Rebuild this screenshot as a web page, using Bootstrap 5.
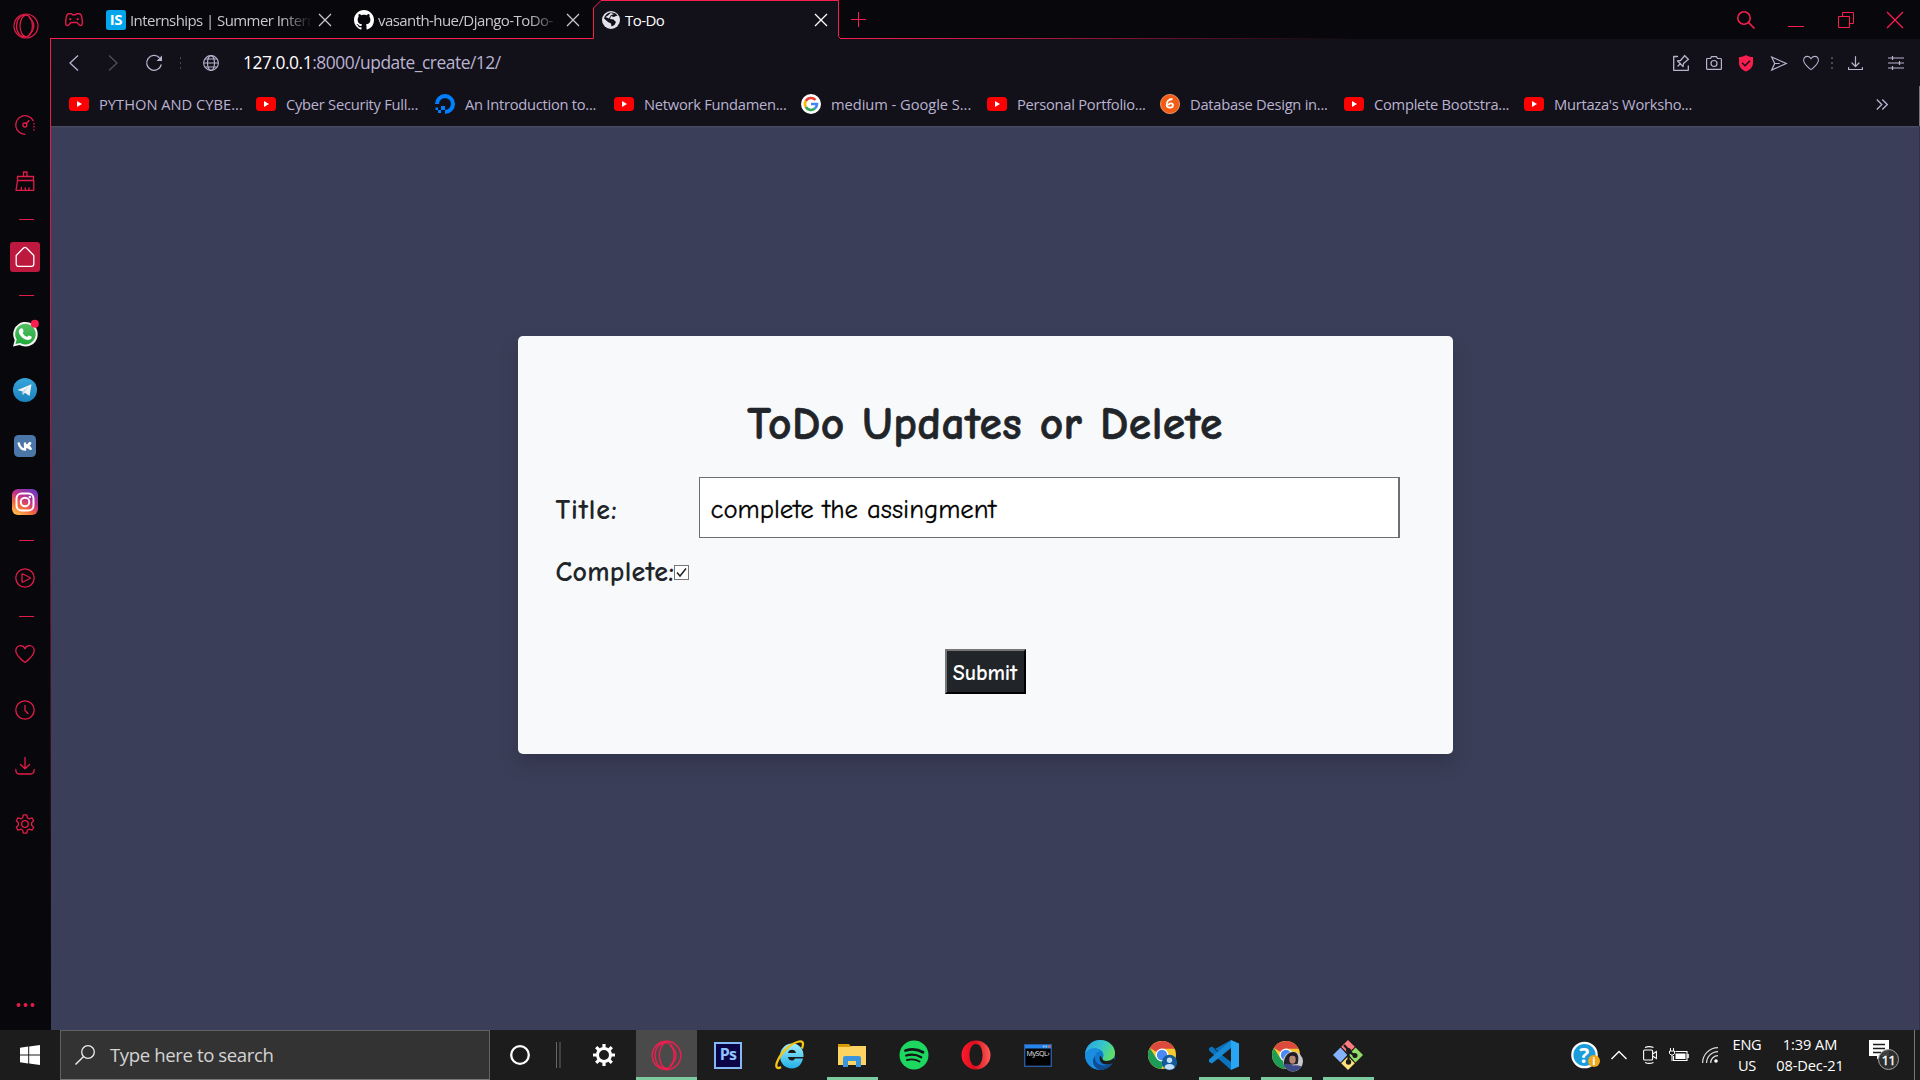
<!DOCTYPE html>
<html lang="en">
<head>
<meta charset="utf-8">
<title>To-Do</title>
<meta name="viewport" content="width=device-width, initial-scale=1">
<link href="https://cdn.jsdelivr.net/npm/bootstrap@5.3.0/dist/css/bootstrap.min.css" rel="stylesheet">
<style>
:root{--gx:#fa1e4e;--gxdim:#e21c48;--bar:#121019;--dark:#07070c;--lav:#b9b3d0}
html,body{height:100%;overflow:hidden}
body{font-family:"Segoe UI","Open Sans","Noto Sans",sans-serif;background:var(--dark);line-height:1}
svg{display:block;flex:none;overflow:visible}
.ln{fill:none;stroke:currentColor;stroke-linecap:round;stroke-linejoin:round}
/* sidebar */
.side{width:51px;flex:none;color:var(--gxdim);background:linear-gradient(#ef1d4b,#c01a40 35%,#5b1026 60%,#14080f 90%,#07070c) right 0 top 38px/1px 962px no-repeat var(--dark)}
.side .logo{height:51px;margin-bottom:46px}
.side .slot{height:56px;padding-right:1px}
.side .rule{height:20px;padding-left:2px}
.side .rule.tall{height:21px}
.side .rule i{width:15px;height:1px;background:var(--gxdim)}
.homebox{width:30px;height:30px;border-radius:3px;background:#bd183e}
/* tabs */
.strip{height:39px;background:var(--dark)}
.strip .frame{left:-1px;top:0;z-index:0}
.strip .front{z-index:1}
.pad{width:45px;color:var(--gxdim)}
.tab{width:248px;padding-left:10px;padding-right:12px;color:#c9c9cc;font-size:15px;letter-spacing:-.57px}
.tab .cap{width:184px;margin-left:4px;white-space:nowrap;line-height:24px}
.tab .fade-out{-webkit-mask-image:linear-gradient(90deg,#000 82%,transparent 99%)}
.tab.on{color:#fff}
.wctl{color:var(--gx);gap:33.5px;padding-right:17px}
/* toolbar */
.tools{height:47px;background:var(--bar);color:var(--lav);padding-left:17px;padding-right:16px}
.url{font-size:17.4px;letter-spacing:-.47px;margin-left:24px;white-space:nowrap;line-height:26px;padding-bottom:2px}
.url b{font-weight:400;color:#fff}
.marks{height:40px;background:var(--bar);color:var(--lav);padding-left:18px;padding-right:31px;border-right:1px solid #77757c}
.marks .list{grid-template-columns:187px 179px 179px 187px 186px 173px 184px 180px 180px;padding-top:7px}
.marks .item{font-size:14.7px;letter-spacing:-.26px;gap:10px;white-space:nowrap;line-height:22px}
/* page */
.page{background:#3a3e58;box-shadow:inset 0 2px 2px -1px #4c5069;padding-top:210px;border-right:1px solid #303349}
.box{width:935px;height:418px;border-radius:5px;background:#f8f9fa;box-shadow:0 10px 20px rgba(0,0,0,.16);padding:53px 38px 0;font-family:"Comic Sans MS","Comic Neue","Open Sans",sans-serif;color:#212529}
.box h1{font-size:45.5px;font-weight:700;line-height:70px;letter-spacing:.45px;word-spacing:1px;margin:0 0 18px;-webkit-text-stroke:.6px currentColor}
.fld{font-size:28px;font-weight:700;line-height:40px;letter-spacing:.25px}
.fld .name{width:143px;padding-top:4px;letter-spacing:.9px}
.title-in{width:701px;height:61px;border:1px solid #6f6f6f;border-right-width:2px;border-radius:0;padding:3px 11px 0;font-size:26.8px;font-weight:400;letter-spacing:0;color:#000;background:#fff;outline:0;-webkit-text-stroke:.3px currentColor}
.tick{width:15px;height:15px;border:1px solid #767676;background:#fff;color:#222}
.send{width:81px;height:45px;background:#212529;color:#fff;border:2px outset #767676;border-right-color:#212529;border-bottom-color:#212529;font-size:22px;font-weight:700;letter-spacing:-.1px;padding:3px 0 0}
/* taskbar */
.task{height:50px;background:#1c1c1c;color:#fff}
.find{width:430px;height:50px;background:#333;border:1px solid #626262;border-bottom-color:#777;color:#d4d4d4;font-size:18.6px;letter-spacing:-.4px;padding-left:14px}
.app{width:62px;height:50px}
.app.run{background:linear-gradient(#7ccb9f,#7ccb9f) center bottom/51px 3px no-repeat}
.app.cur{background:linear-gradient(#7ccb9f,#7ccb9f) right bottom/61px 3px no-repeat,linear-gradient(#4a4a4a,#4a4a4a) right top/61px 50px no-repeat}
.small-t{font-size:14.6px;line-height:21.5px;text-align:center;letter-spacing:-.3px;white-space:nowrap}
.small-t.date{letter-spacing:-.1px}
.ps{font:700 16px/21px "Open Sans",sans-serif;width:28px;height:27px;border:2px solid #86b8f3;background:#0b0547;color:#8fc4ff;letter-spacing:-.7px;text-align:center}
</style>
<script src="https://cdn.jsdelivr.net/npm/bootstrap@5.3.0/dist/js/bootstrap.bundle.min.js"></script>
</head>
<body class="d-flex flex-column vh-100">
<svg width="0" height="0" class="position-absolute">
<defs>
<symbol id="yt" viewBox="0 0 20 20"><rect y="3" width="20" height="14" rx="3.5" fill="#f00"/><path d="M8 7l5 3-5 3z" fill="#fff"/></symbol>
<symbol id="xx" viewBox="0 0 14 14"><path d="M1 1l12 12M13 1L1 13" stroke="currentColor" stroke-width="1.3" fill="none"/></symbol>
<symbol id="gxo" viewBox="0 0 26 26"><g fill="none" stroke="currentColor" stroke-width="1.2"><circle cx="13" cy="13" r="12"/><ellipse cx="13.2" cy="13" rx="6.2" ry="10.8"/><path d="M13 2.2C8 1.500 3.500 6 3.500 13s4.500 11.500 9.500 10.800M16 4.500c6.500 5 6.500 12 0 17"/></g></symbol>
<symbol id="heart" viewBox="0 0 20 20"><path class="ln" stroke-width="1.3" d="M10 18.300C8.800 17.800.8 11.300.8 6.700.8 3.700 2.800 1.700 5.300 1.700 7.700 1.700 9.300 3 10 4.700c.7-1.700 2.300-3 4.700-3 2.500 0 4.500 2 4.500 5 0 4.600-8 11.100-9.200 11.600z"/></symbol>
<symbol id="down" viewBox="0 0 20 20"><path class="ln" stroke-width="1.3" d="M10 1.500v11M5.500 8.500l4.500 4.300 4.500-4.300M.8 13.500c0 3 1 4.500 3.500 4.500h11.400c2.500 0 3.500-1.500 3.500-4.500"/></symbol>
<symbol id="chrome" viewBox="0 0 30 30"><circle cx="15" cy="15" r="14" fill="#f7c92f"/><path d="M15 15L2.900 8A14 14 0 0 1 27.200 8.500H15z" fill="#db4a3c"/><path d="M15 1a14 14 0 0 1 12.200 7.500H15L9 18z" fill="#db4a3c"/><path d="M2.900 8A14 14 0 0 0 14 29l6.500-11L15 15 9.500 18.500z" fill="#1c9c57"/><circle cx="15" cy="15" r="6.500" fill="#fff"/><circle cx="15" cy="15" r="5.200" fill="#4a8af4"/></symbol>
<linearGradient id="fadeL" gradientUnits="userSpaceOnUse" x1="839" x2="1350" y1="0" y2="0"><stop stop-color="#fa1e4e"/><stop offset=".35" stop-color="#b81940"/><stop offset="1" stop-color="#0a080d"/></linearGradient>
<linearGradient id="ig" x1=".2" y1="1" x2=".8" y2="0"><stop stop-color="#fdc04f"/><stop offset=".3" stop-color="#f4693c"/><stop offset=".6" stop-color="#c5308c"/><stop offset="1" stop-color="#6b3bc0"/></linearGradient>
<linearGradient id="wa" x2="0" y2="1"><stop stop-color="#52c062"/><stop offset="1" stop-color="#20a83c"/></linearGradient>
<linearGradient id="tg" x2="0" y2="1"><stop stop-color="#37a5dc"/><stop offset="1" stop-color="#1b82bd"/></linearGradient>
<linearGradient id="edgeTop" x1="0" y1=".3" x2="1" y2=".7"><stop stop-color="#2aa6e8"/><stop offset=".5" stop-color="#37c6c6"/><stop offset="1" stop-color="#63e25a"/></linearGradient>
<linearGradient id="opr" x2="1" y2="0"><stop stop-color="#ff1b2d"/><stop offset=".45" stop-color="#d90d1e"/><stop offset="1" stop-color="#ff5c55"/></linearGradient>
<linearGradient id="iegr" x2="0" y2="1"><stop stop-color="#9df0ff"/><stop offset="1" stop-color="#23aee6"/></linearGradient>
</defs>
</svg>

<div class="d-flex flex-grow-1" style="min-height:0">
  <aside class="side d-flex flex-column">
    <div class="logo d-flex align-items-center justify-content-center"><svg width="26" height="26"><use href="#gxo"/></svg></div>
    <div class="slot d-flex align-items-center justify-content-center"><svg width="20" height="20" viewBox="0 0 20 20"><path class="ln" stroke-width="1.3" d="M10 19.300A9.300 9.300 0 1 1 18.200 5.600M14 5.500l-3 3.300"/><circle class="ln" stroke-width="1.3" cx="9.900" cy="10" r="2"/><path class="ln" stroke-width="1.300" stroke-dasharray=".5 2.500" d="M19 8.500v7"/></svg></div>
    <div class="slot d-flex align-items-center justify-content-center"><svg width="20" height="20" viewBox="0 0 20 20"><path class="ln" stroke-width="1.300" d="M8.500 5.500V1h3.500v4.500M2.500 9.500v-4h16v4zM2.500 9.500L1 19.300h17.800V9.500M6 19.300l.5-3M10.300 19.300V17M14 19.300v-2.500"/></svg></div>
    <div class="rule d-flex align-items-center justify-content-center"><i></i></div>
    <div class="slot d-flex align-items-center justify-content-center"><div class="homebox d-flex align-items-center justify-content-center text-white"><svg width="20" height="20" viewBox="0 0 20 20"><path class="ln" stroke-width="1.300" d="M1.200 8.500L8.500 1c1-.8 2-.8 3 0l7.300 7.500v8.500q0 2.300-2.300 2.300h-13q-2.300 0-2.300-2.300z"/></svg></div></div>
    <div class="rule tall d-flex align-items-center justify-content-center"><i></i></div>
    <div class="slot d-flex align-items-center justify-content-center"><svg width="26" height="26" viewBox="0 0 26 26"><path d="M1 25.500l1.700-6.300A12.300 12.300 0 1 1 7.500 24z" fill="#f3f3f3"/><path d="M3.500 23l1.200-4.400A10.300 10.300 0 1 1 8.200 22z" fill="url(#wa)"/><path d="M8.800 7.500c1-.7 1.700-.3 2 .6l.8 2c.2.800-.9 1.400-.9 1.800 1 2 2.400 3.200 4.300 3.900.6.100 1.200-1.600 1.900-1.400l2.600 1.200c.6.500 0 3.400-3.400 3.400-5 0-9.600-5.700-9.300-8.700.1-1.300 1-2.300 2-2.800z" fill="#fff"/><circle cx="22.800" cy="2.800" r="4" fill="#fa1e4e"/></svg></div>
    <div class="slot d-flex align-items-center justify-content-center"><svg width="24" height="24" viewBox="0 0 24 24"><circle cx="12" cy="12" r="12" fill="url(#tg)"/><path d="M4.500 12L18.500 6.300 16.500 18l-4.500-3.300-2.200 2.200-.3-3.500z" fill="#eef3f7"/><path d="M9.500 13.400L16 8.500 11 14l-1.200 2.900z" fill="#b9cfdf"/></svg></div>
    <div class="slot d-flex align-items-center justify-content-center"><svg width="22" height="22" viewBox="0 0 22 22"><rect width="22" height="22" rx="4.500" fill="#4a76a8"/><path d="M4.500 7.500c1 4.500 3 7 6.500 7V7.500v3.500c2.500 0 4-1.500 5.500-3.500-.5 2-1.500 3-3 3.700 2 .5 3 1.800 3.700 3.300-1.700-2.200-3.400-3-6.200-3" fill="none" stroke="#fff" stroke-width="2.300"/></svg></div>
    <div class="slot d-flex align-items-center justify-content-center"><svg width="26" height="26" viewBox="0 0 26 26"><rect width="26" height="26" rx="6" fill="url(#ig)"/><g fill="none" stroke="#fff" stroke-width="2"><rect x="4.500" y="4.500" width="17" height="17" rx="5"/><circle cx="13" cy="13" r="4.300"/></g><circle cx="17.800" cy="8" r="1.200" fill="#fff"/></svg></div>
    <div class="rule d-flex align-items-center justify-content-center"><i></i></div>
    <div class="slot d-flex align-items-center justify-content-center"><svg width="20" height="20" viewBox="0 0 20 20"><circle class="ln" stroke-width="1.300" cx="10" cy="10" r="9.200"/><path class="ln" stroke-width="1.300" d="M7 6.200v7.600q.3.500 1 .2l7-3.500q.5-.5 0-1l-7-3.500q-.7-.2-1 .2z"/></svg></div>
    <div class="rule d-flex align-items-center justify-content-center"><i></i></div>
    <div class="slot d-flex align-items-center justify-content-center"><svg width="20" height="20"><use href="#heart"/></svg></div>
    <div class="slot d-flex align-items-center justify-content-center"><svg width="20" height="20" viewBox="0 0 20 20"><circle class="ln" stroke-width="1.300" cx="10" cy="10" r="9.200"/><path class="ln" stroke-width="1.300" d="M10 5.500v5l3 3"/></svg></div>
    <div class="slot d-flex align-items-center justify-content-center"><svg width="20" height="20"><use href="#down"/></svg></div>
    <div class="slot d-flex align-items-center justify-content-center pt-1"><svg width="20" height="20" viewBox="0 0 20 20"><circle class="ln" stroke-width="1.300" cx="10" cy="10" r="3.300"/><path class="ln" stroke-width="1.300" d="M8.300.8h3.400l.6 2.900 1.900 1.100 2.800-1 1.700 3-2.100 2v2.400l2.100 2-1.700 3-2.800-1-1.900 1.100-.6 2.900H8.300l-.6-2.900-1.900-1.100-2.800 1-1.700-3 2.100-2V8.800l-2.100-2 1.700-3 2.800 1 1.900-1.100z"/></svg></div>
    <div class="mt-auto d-flex justify-content-center" style="padding-bottom:23px"><svg width="20" height="4" viewBox="0 0 20 4" fill="currentColor"><circle cx="2.500" cy="2" r="2"/><circle cx="9.500" cy="2" r="2"/><circle cx="16.500" cy="2" r="2"/></svg></div>
  </aside>

  <div class="d-flex flex-column flex-grow-1" style="min-width:0">
    <header class="strip position-relative">
      <svg class="frame position-absolute" width="1870" height="39" viewBox="50 0 1870 39"><path d="M593 39V8.500L601.500 0H839V39z" fill="#121019"/><path d="M50 38.500H593.500V8L601 .5H838.500V36.500L840.500 38.500" fill="none" stroke="#fa1e4e"/><rect x="840" y="38" width="520" height="1" fill="url(#fadeL)"/></svg>
      <div class="front position-relative h-100 d-flex align-items-center">
        <div class="pad d-flex justify-content-center"><svg width="18" height="14" viewBox="0 0 18 14"><path class="ln" stroke-width="1.400" d="M4 .8h2.500l1 1h3l1-1H14c1.500 0 2.300 1.200 2.700 3 .5 2.500.8 5 .5 7-.2 1.700-1.700 2.300-2.900 1.200L12 9.500H6L3.700 12C2.500 13.100 1 12.500.8 10.800c-.3-2 0-4.500.5-7C1.700 2 2.500.8 4 .8z"/><circle cx="5.300" cy="6.200" r="1.100" fill="currentColor"/><circle cx="12.700" cy="6.200" r="1.100" fill="currentColor"/></svg></div>
        <div class="tab d-flex align-items-center"><svg width="20" height="20" viewBox="0 0 20 20"><rect width="20" height="20" rx="2.500" fill="#00a5ec"/><text x="10" y="15.300" text-anchor="middle" font-family="Open Sans" font-weight="700" font-size="15" letter-spacing="-.4" fill="#fff">IS</text></svg><span class="cap fade-out">Internships | Summer Intern</span><svg class="ms-auto" width="14" height="14"><use href="#xx"/></svg></div>
        <div class="tab d-flex align-items-center"><svg width="20" height="20" viewBox="0 0 16 16" fill="#fff"><path d="M8 0C3.580 0 0 3.580 0 8c0 3.540 2.290 6.530 5.470 7.590.4.070.55-.17.55-.38 0-.19-.01-.82-.01-1.490-2.010.37-2.530-.49-2.690-.94-.09-.23-.48-.94-.82-1.130-.28-.15-.68-.52-.01-.53.63-.01 1.080.58 1.230.82.72 1.210 1.870.87 2.330.66.070-.52.28-.87.51-1.070-1.780-.2-3.640-.89-3.640-3.950 0-.87.31-1.590.82-2.150-.08-.2-.36-1.020.08-2.120 0 0 .67-.21 2.200.82.64-.18 1.320-.27 2-.27s1.360.09 2 .27c1.530-1.040 2.200-.82 2.200-.82.44 1.100.16 1.920.08 2.120.51.560.82 1.270.82 2.150 0 3.070-1.870 3.750-3.650 3.950.29.250.54.730.54 1.480 0 1.070-.01 1.930-.01 2.200 0 .21.150.46.550.38A8.010 8.010 0 0 0 16 8c0-4.420-3.580-8-8-8z"/></svg><span class="cap fade-out">vasanth-hue/Django-ToDo-</span><svg class="ms-auto" width="14" height="14"><use href="#xx"/></svg></div>
        <div class="tab on d-flex align-items-center"><svg width="19" height="18" viewBox="0 0 19 18"><circle cx="9" cy="9" r="9" fill="#e2e2ea"/><path d="M8 1.500C11 1 14 2 15.500 4.500L11.500 6 9 5 8 8l3.500.5 2.500 2.500-1.500 3-3 1.500-.5-3L6 11 2 7.500C2.500 4.500 5 2.200 8 1.500z" fill="#121019"/><path d="M8.500 2L6 4.500 3.500 6 7 7.500 8.500 4.500 12 3z" fill="#e2e2ea"/></svg><span class="cap">To-Do</span><svg class="ms-auto" width="14" height="14"><use href="#xx"/></svg></div>
        <svg style="color:var(--gx);margin-left:11px" width="15" height="15" viewBox="0 0 15 15"><path d="M7.500 0v15M0 7.500h15" stroke="currentColor"/></svg>
        <div class="wctl ms-auto d-flex align-items-center">
          <svg width="18" height="18" viewBox="0 0 18 18"><circle cx="7" cy="7" r="6.200" fill="none" stroke="currentColor" stroke-width="1.500"/><path d="M11.500 11.500L17.500 17.500" stroke="currentColor" stroke-width="1.700"/></svg>
          <svg width="16" height="16" viewBox="0 0 16 16"><path d="M0 14.500h16" stroke="currentColor"/></svg>
          <svg width="16" height="16" viewBox="0 0 16 16"><path d="M.5 4.500h11v11H.5zM4.500 4.500V.5h11v11h-4" fill="none" stroke="currentColor"/></svg>
          <svg width="16" height="16" viewBox="0 0 16 16"><path d="M0 0l16 16M16 0L0 16" stroke="currentColor" stroke-width="1.300"/></svg>
        </div>
      </div>
    </header>

    <nav class="tools d-flex align-items-center">
      <svg width="11" height="16" viewBox="0 0 11 16"><path d="M10 .5L2 8l8 7.500" fill="none" stroke="currentColor" stroke-width="1.300"/></svg>
      <svg style="margin-left:29px;opacity:.38" width="11" height="16" viewBox="0 0 11 16"><path d="M1 .5L9 8l-8 7.500" fill="none" stroke="currentColor" stroke-width="1.300"/></svg>
      <svg style="margin-left:27px" width="16" height="16" viewBox="0 0 16 16"><path d="M15.300 9.500A7.400 7.400 0 1 1 13.500 2.800" fill="none" stroke="currentColor" stroke-width="1.300"/><path d="M16 .5V6h-5.500z" fill="currentColor"/></svg>
      <svg style="margin-left:18px;opacity:.35" width="2" height="12" viewBox="0 0 2 12" fill="currentColor"><path d="M0 0h1v2H0zM0 5h1v2H0zM0 10h1v2H0z"/></svg>
      <svg style="margin-left:21px" width="16" height="16" viewBox="0 0 16 16"><g fill="none" stroke="currentColor" stroke-width="1.100"><circle cx="8" cy="8" r="7.400"/><ellipse cx="8" cy="8" rx="3.500" ry="7.400"/><path d="M.6 8h14.800M1.800 4h12.400M1.800 12h12.400"/></g></svg>
      <span class="url"><b>127.0.0.1</b>:8000/update_create/12/</span>
      <div class="ms-auto d-flex align-items-center">
        <div class="d-flex align-items-center" style="gap:16.5px">
          <svg width="16" height="16" viewBox="0 0 16 16"><path class="ln" stroke-width="1.300" d="M4.500 1.500H.7v13.800h14.600V11M5 11L7.500 8.500M4.500 6l5.500 5.500.5-3L14.500 5 15.500 4.500 11.500.5 11 1.500 7.500 5.500z"/></svg>
          <svg width="16" height="14" viewBox="0 0 16 14"><path class="ln" stroke-width="1.200" d="M1.500 2.500h3L5.500.6h5l1 1.900h3q.9 0 .9.900v9q0 .9-.9.900h-13q-.9 0-.9-.9v-9q0-.9.900-.9z"/><circle class="ln" stroke-width="1.200" cx="8" cy="7.500" r="3"/></svg>
          <svg width="16" height="16" viewBox="0 0 16 16"><path d="M8 0c2 1.500 4.500 2 7 2v6c0 4.500-3.500 7-7 8.500C4.500 15 1 12.500 1 8V2c2.500 0 5-.5 7-2z" fill="#fa1e4e"/><path d="M4 7.700l3 3 5-5" fill="none" stroke="#121019" stroke-width="1.500"/></svg>
          <svg width="16" height="16" viewBox="0 0 16 16"><path d="M.7 2L15.300 8.500.7 15l3-6.500zM3.700 8.500h5" fill="none" stroke="currentColor" stroke-width="1.200"/></svg>
          <svg width="16" height="16"><use href="#heart"/></svg>
        </div>
        <svg style="margin-left:12px;opacity:.35" width="2" height="12" viewBox="0 0 2 12" fill="currentColor"><path d="M0 0h2v2H0zM0 5h2v2H0zM0 10h2v2H0z"/></svg>
        <svg style="margin-left:15px" width="15" height="16" viewBox="0 0 15 16"><path class="ln" stroke-width="1.200" d="M7.500 1.500v10M4 8l3.500 3.500L11 8M.6 12.500v2h13.800v-2"/></svg>
        <svg style="margin-left:25px" width="16" height="16" viewBox="0 0 16 16"><path d="M0 3h16M0 8h16M0 13h16M4.500 1v4M11.500 6v4M4.500 11v4" fill="none" stroke="currentColor" stroke-width="1.200"/></svg>
      </div>
    </nav>

    <div class="marks d-flex align-items-start justify-content-between">
      <div class="list d-grid">
        <div class="item d-flex align-items-center"><svg width="20" height="20"><use href="#yt"/></svg><span style="letter-spacing:0">PYTHON AND CYBE...</span></div>
        <div class="item d-flex align-items-center"><svg width="20" height="20"><use href="#yt"/></svg>Cyber Security Full...</div>
        <div class="item d-flex align-items-center"><svg width="20" height="20" viewBox="0 0 20 20"><path d="M10 18A8 8 0 1 0 2 10" fill="none" stroke="#0080ff" stroke-width="4"/><path d="M6 12h4v4H6zM3 16h3v3H3zM.5 13.500H3V16H.5z" fill="#0080ff"/></svg>An Introduction to...</div>
        <div class="item d-flex align-items-center"><svg width="20" height="20"><use href="#yt"/></svg>Network Fundamen...</div>
        <div class="item d-flex align-items-center"><svg width="20" height="20" viewBox="0 0 20 20"><circle cx="10" cy="10" r="10" fill="#fff"/><g fill="none" stroke-width="2.600"><path d="M14.500 6A6 6 0 0 0 4.800 7" stroke="#ea4335"/><path d="M4.800 7a6 6 0 0 0 0 6" stroke="#fbbc05"/><path d="M4.800 13a6 6 0 0 0 9 1.600" stroke="#34a853"/><path d="M10 10h6a6 6 0 0 1-2.200 4.600" stroke="#4285f4"/></g></svg><span style="letter-spacing:-.05px">medium - Google S...</span></div>
        <div class="item d-flex align-items-center"><svg width="20" height="20"><use href="#yt"/></svg>Personal Portfolio...</div>
        <div class="item d-flex align-items-center"><svg width="20" height="20" viewBox="0 0 20 20"><circle cx="10" cy="10" r="9.600" fill="#f35c14" stroke="#f9a77a" stroke-width=".8"/><path d="M12.500 5C8.500 5 6.500 8 6.700 11c.2 3.500 6.200 3.500 6.300.3 0-2.500-4-2.500-4.500 0" fill="none" stroke="#fff" stroke-width="1.800"/></svg>Database Design in...</div>
        <div class="item d-flex align-items-center"><svg width="20" height="20"><use href="#yt"/></svg>Complete Bootstra...</div>
        <div class="item d-flex align-items-center"><svg width="20" height="20"><use href="#yt"/></svg>Murtaza's Worksho...</div>
      </div>
      <svg style="margin-top:13px" width="12" height="11" viewBox="0 0 12 11"><path d="M.8.5l5 5-5 5M6.300.5l5 5-5 5" fill="none" stroke="currentColor" stroke-width="1.300"/></svg>
    </div>

    <main class="page flex-grow-1 d-flex justify-content-center align-items-start" style="min-height:0">
      <form class="box" onsubmit="return false">
        <h1 class="text-center">ToDo Updates or Delete</h1>
        <div class="fld d-flex align-items-center"><label class="name" for="title">Title:</label><input id="title" class="title-in" type="text" value="complete the assingment"></div>
        <div class="fld d-flex align-items-center" style="margin-top:14px"><span>Complete:</span><span class="tick"><svg width="13" height="13" viewBox="0 0 13 13"><path d="M2 6.500l3 3.500 6-7.500" fill="none" stroke="currentColor" stroke-width="1.500"/></svg></span></div>
        <div class="text-center" style="margin-top:57px"><button class="send">Submit</button></div>
      </form>
    </main>
  </div>
</div>

<footer class="task d-flex align-items-center">
  <div style="width:60px" class="d-flex justify-content-center"><svg width="20" height="20" viewBox="0 0 20 20" fill="#fff"><path d="M0 2.700L8.200 1.600v8H0zM9.200 1.500L20 0v9.600H9.200zM0 10.500h8.200v8L0 17.300zM9.200 10.500H20V20L9.200 18.600z"/></svg></div>
  <div class="find d-flex align-items-center"><svg width="20" height="20" viewBox="0 0 20 20"><circle cx="13" cy="7" r="6.300" fill="none" stroke="#eee" stroke-width="1.300"/><path d="M8.600 11.500L.5 19.500" stroke="#eee" stroke-width="1.400"/></svg><span style="margin-left:15px">Type here to search</span></div>
  <div style="width:60px" class="d-flex justify-content-center"><svg width="20" height="20" viewBox="0 0 20 20"><circle cx="10" cy="10" r="8.800" fill="none" stroke="#fff" stroke-width="2.300"/></svg></div>
  <div style="width:23px" class="d-flex justify-content-start"><svg style="margin-left:6px" width="5" height="26" viewBox="0 0 5 26"><path d="M.5 0v26M4 0v26" stroke="#666"/></svg></div>
  <div class="app d-flex align-items-center justify-content-center"><svg width="24" height="24" viewBox="0 0 24 24"><circle cx="12" cy="12" r="6.500" fill="none" stroke="#fff" stroke-width="3"/><path stroke="#fff" stroke-width="3.200" d="M12 1v4M12 19v4M1 12h4M19 12h4M4.200 4.200L7 7M17 17l2.800 2.800M4.200 19.800L7 17M17 7l2.800-2.800"/></svg></div>
  <div class="app cur d-flex align-items-center justify-content-center" style="color:#ee1f4e"><svg width="31" height="31"><use href="#gxo"/></svg></div>
  <div class="app d-flex align-items-center justify-content-center"><div class="ps">Ps</div></div>
  <div class="app d-flex align-items-center justify-content-center"><svg width="30" height="30" viewBox="0 0 30 30"><path d="M28 18.500h-8c-1 3-6.500 2.800-7-1.500h15.500C29 8 23.500 3.500 17 3.500S5 9 5 16s5 12.500 12 12.500c5.500 0 9.500-3.500 11-10zM13 13c.5-4.500 7.500-4.500 8 0z" fill="url(#iegr)"/><path d="M6 27C1 30 0 26 3 20 7 11 17 3 24 1.500c5-1 4.500 3 3 7" fill="none" stroke="#f6c515" stroke-width="2.300"/></svg></div>
  <div class="app run d-flex align-items-center justify-content-center"><svg width="28" height="24" viewBox="0 0 28 24"><path d="M0 1h11l2 3H0z" fill="#d99a06"/><path d="M0 4h11l2-1h15v19H0z" fill="#fdd462"/><path d="M5 24V15q0-2 2-2h14q2 0 2 2v9h-5v-6h-8v6z" fill="#3a95dd"/></svg></div>
  <div class="app d-flex align-items-center justify-content-center"><svg width="30" height="30" viewBox="0 0 30 30"><circle cx="15" cy="15" r="14.500" fill="#1ed760"/><g fill="none" stroke="#141414" stroke-linecap="round"><path d="M6.500 10.500c6-1.800 12.500-1.200 17.500 1.700" stroke-width="2.800"/><path d="M7.200 15.500c5-1.500 10.500-1 15 1.700" stroke-width="2.300"/><path d="M8 20c4.500-1.200 8.800-.7 12.500 1.500" stroke-width="1.900"/></g></svg></div>
  <div class="app d-flex align-items-center justify-content-center"><svg width="30" height="30" viewBox="0 0 30 30"><path fill-rule="evenodd" d="M15 .5a14.500 14.500 0 1 1 0 29 14.500 14.500 0 0 1 0-29zM15 4c-4 0-6.500 4.800-6.500 11S11 26 15 26s6.500-4.800 6.500-11S19 4 15 4z" fill="url(#opr)"/></svg></div>
  <div class="app d-flex align-items-center justify-content-center"><svg width="28" height="23" viewBox="0 0 28 23"><rect x=".7" y=".7" width="26.600" height="21.600" fill="#000" stroke="#2c5a9e" stroke-width="1.400"/><path d="M1 1h26v3.500H1z" fill="#2685ea"/><path d="M24 1.500h2.500v2H24z" fill="#e36b4b"/><path d="M19 1.500h1.500v2H19zM21.500 1.500H23v2h-1.500z" fill="#8ac4ff"/><text x="2.500" y="12.300" font-family="Open Sans" font-size="7" textLength="23" fill="#eee">MySQL›</text></svg></div>
  <div class="app d-flex align-items-center justify-content-center"><svg width="30" height="30" viewBox="0 0 30 30"><circle cx="15" cy="15" r="15" fill="#0f78cf"/><path d="M0 14C1 5 8 0 15 0c9 0 15 6 15 13 0 5-4 8-8.500 8-3 0-4.500-1.500-4-2.500 1-2 1.500-3 .5-5.500C16 8 5 6 0 14z" fill="url(#edgeTop)"/><path d="M0 14c4-7 12-7 16-3-4 0-7 4-6 9 1 5 5 8 9 9C9 32-.5 24 0 14z" fill="#1c8ee0"/><path d="M10 16c-1 8 7 12 17 7.500C24 28 19 30 15 30 8 28 6 20 10 16z" fill="#104c94"/><path d="M17.500 18.500c-.5 1 1 2.500 4 2.500 3 0 5.500-1 7-3l1.500 4-3 1.500c-7 2.500-14 0-12-8z" fill="#1c1c1c"/></svg></div>
  <div class="app d-flex align-items-center justify-content-center"><svg width="30" height="30" viewBox="0 0 30 30"><use href="#chrome" width="30" height="30"/><circle cx="22.500" cy="22.500" r="7.700" fill="#125a9c"/><circle cx="22.500" cy="20.300" r="2.700" fill="#bfe0fa"/><path d="M17.500 28q0-4 5-4t5 4q-5 3.500-10 0z" fill="#bfe0fa"/></svg></div>
  <div class="app run d-flex align-items-center justify-content-center"><svg width="30" height="30" viewBox="0 0 30 30"><path d="M22 0l-12.500 11.500L3 6.500 0 8v2.500L22 30V22L5.500 9.200z" fill="#0b72bd"/><path d="M0 19.500L22 0v8L3 23.500 0 22z" fill="#1788d4"/><path d="M22 0l8 3.500v23L22 30z" fill="#2aa5f2"/></svg></div>
  <div class="app run d-flex align-items-center justify-content-center"><svg width="30" height="30" viewBox="0 0 30 30"><use href="#chrome" width="30" height="30"/><g transform="translate(22 21.500)"><circle r="10" fill="#c9c9cd"/><path d="M-9 4C-10-3-6-10 1-9.500c5 1 5 7 3.500 12z" fill="#26222c"/><ellipse cx="-.5" cy="-2" rx="3.200" ry="4.200" fill="#b58671"/><path d="M-9.500 3Q-3 1 0 4q4-1 8.500 1A10 10 0 0 1-9.500 3z" fill="#3d4a86"/><path d="M-5-4Q-1-8 4-4L3-8-4-8z" fill="#1d1a22"/></g></svg></div>
  <div class="app run d-flex align-items-center justify-content-center"><svg width="30" height="30" viewBox="0 0 30 30"><path d="M15 0l6.800 6.800L15 13.600 8.200 6.800z" fill="#ff7b80"/><path d="M7.500 7.500l6.800 7.500-6.800 7.500L0 15z" fill="#86b2fb"/><path d="M22.500 7.500L30 15l-7.500 7.500-6.800-7.500z" fill="#93dd66"/><path d="M15 16.400l6.800 6.800L15 30l-6.800-6.800z" fill="#ffe27a"/><path d="M11 5l4.500 5v14M15.500 11l6 4.500" fill="none" stroke="#1c1c1c" stroke-width="2.200"/><g fill="#1c1c1c"><circle cx="15.500" cy="10.500" r="2.500"/><circle cx="22" cy="15.500" r="2.500"/><circle cx="15.500" cy="22" r="2.700"/></g></svg></div>

  <div class="ms-auto d-flex align-items-center">
    <svg width="30" height="30" viewBox="0 0 30 30"><circle cx="13.500" cy="15" r="12.200" fill="#1b9ddb" stroke="#fff" stroke-width="2.200"/><text x="13.300" y="22.500" text-anchor="middle" font-family="Open Sans" font-weight="700" font-size="21" fill="#fff">?</text><circle cx="23" cy="21" r="6" fill="#f0a91e"/><text x="23" y="25" text-anchor="middle" font-family="Open Sans" font-weight="700" font-size="11" fill="#fff">i</text></svg>
    <svg style="margin-left:10px" width="16" height="10" viewBox="0 0 16 10"><path d="M.5 9L8 1.500 15.500 9" fill="none" stroke="#fff" stroke-width="1.400"/></svg>
    <svg style="margin-left:16px" width="14" height="18" viewBox="0 0 14 18"><g fill="none" stroke="#fff" stroke-width="1.100"><rect x=".6" y="4" width="9" height="10" rx="1"/><path d="M9.600 8L13.400 5.500v7L9.600 10M2 1.500Q6 -.3 10.500 1.500M2 16.500q4 1.800 8.500 0"/></g></svg>
    <svg style="margin-left:12px" width="20" height="14" viewBox="0 0 20 14"><path d="M6.500 3.500h11.500v9H4.500V8" fill="none" stroke="#fff" stroke-width="1.100"/><path d="M6.500 5.500h10v5.500h-10zM18.300 6h1.500v4h-1.500z" fill="#fff"/><path d="M1.500 0v3M4.500 0v3M.5 3h5v2.500L4 7H2L.5 5.500zM3 7v6" fill="none" stroke="#fff"/></svg>
    <svg style="margin-left:13px" width="16" height="16" viewBox="0 0 16 16"><g fill="none" stroke="#ddd" stroke-width="1.200"><path d="M.6 16A15.400 15.400 0 0 1 16 .6"/><path d="M4.600 16A11.400 11.400 0 0 1 16 4.600"/><path d="M8.600 16A7.400 7.400 0 0 1 16 8.600"/></g><circle cx="14" cy="14" r="1.800" fill="#fff"/></svg>
    <div class="small-t" style="margin-left:13px;width:32px">ENG<br>US</div>
    <div class="small-t date" style="margin-left:12px;width:70px">1:39 AM<br>08-Dec-21</div>
    <svg style="margin-left:24px" width="30" height="30" viewBox="0 0 30 30"><path d="M0 0h20v16h-8.500L8 19.500V16H0z" fill="#fff"/><path d="M4 4.500h12M4 8.500h12M4 12.500h8" stroke="#1c1c1c" stroke-width="1.300"/><circle cx="19.500" cy="19.500" r="10" fill="#303030" fill-opacity=".92" stroke="#a5a5a5"/><text x="19.300" y="24.500" text-anchor="middle" font-family="Open Sans" font-size="13.500" letter-spacing="-1" fill="#fff" stroke="#fff" stroke-width=".4">11</text></svg>
    <svg style="margin-left:15px;margin-right:5px" width="1" height="50"><rect width="1" height="50" fill="#777"/></svg>
  </div>
</footer>
</body>
</html>
